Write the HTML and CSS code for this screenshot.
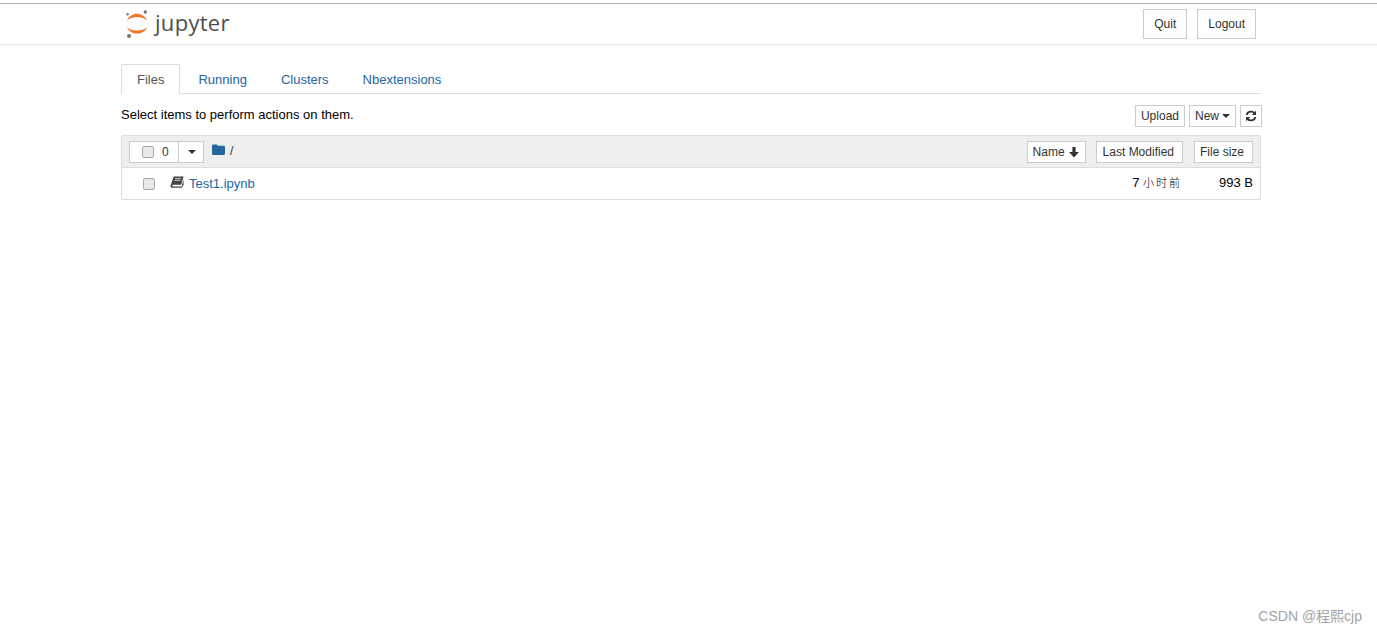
FILE: index.html
```html
<!DOCTYPE html>
<html lang="en">
<head>
<meta charset="utf-8">
<title>Home</title>
<link rel="stylesheet" href="styles.css">
</head>
<body>
<div class="topline"></div>
<header class="header">
  <div class="header-inner">
    <a class="logo">
      <svg class="logo-mark" width="24" height="28" viewBox="0 0 24 28">
        <path d="M2 10.5 C5.5 1.5 18.5 1.5 22 10.5 C17.5 5.8 6.5 5.8 2 10.5 Z" fill="#f37726"/>
        <path d="M2 17.5 C6 25.5 18.5 25.5 22 17.5 C17.5 21.5 6.5 21.5 2 17.5 Z" fill="#f37726"/>
        <circle cx="20.3" cy="2" r="1.7" fill="#767677"/>
        <circle cx="2.6" cy="4.2" r="1.2" fill="#767677"/>
        <circle cx="4" cy="26" r="2" fill="#767677"/>
      </svg>
      <span class="logo-text">jupyter</span>
    </a>
    <div class="header-actions">
      <button class="btn btn-tall">Quit</button>
      <button class="btn btn-tall">Logout</button>
    </div>
  </div>
</header>
<main class="container">
  <nav class="tabs">
    <a class="tab active">Files</a>
    <a class="tab">Running</a>
    <a class="tab">Clusters</a>
    <a class="tab">Nbextensions</a>
  </nav>
  <div class="toolbar">
    <span class="hint">Select items to perform actions on them.</span>
    <div class="toolbar-actions">
      <button class="btn btn-sm">Upload</button>
      <button class="btn btn-sm btn-new">New<span class="caret"></span></button>
      <button class="btn btn-sm btn-icon">
        <svg width="12" height="12" viewBox="0 0 12 12"><g fill="none" stroke="#333" stroke-width="1.8"><path d="M1.6 5A4.5 4.5 0 0 1 9.6 3.4"/><path d="M10.4 7A4.5 4.5 0 0 1 2.4 8.6"/></g><path d="M11 .8V5H6.8Z M1 11.2V7H5.2Z" fill="#333"/></svg>
      </button>
    </div>
  </div>
  <section class="list">
    <div class="list-head">
      <div class="select-group">
        <span class="select-main"><span class="check"></span><span class="count">0</span></span>
        <span class="select-drop"><span class="caret"></span></span>
      </div>
      <svg class="folder" width="13" height="11" viewBox="0 0 13 11"><path d="M0 2C0 1 .6.5 1.4.5H4.2C5 .5 5.4 1 5.6 1.8H11.6C12.4 1.8 13 2.4 13 3.2V9.5C13 10.3 12.4 11 11.6 11H1.4C.6 11 0 10.3 0 9.5Z" fill="#22659f"/></svg>
      <span class="path">/</span>
      <div class="sort-group">
        <button class="btn btn-sort">Name
          <svg width="12" height="12" viewBox="0 0 12 12"><path d="M4.4 1H7.6V6H11L6 11.4 1 6H4.4Z" fill="#333"/></svg>
        </button>
        <button class="btn btn-sort">Last Modified</button>
        <button class="btn btn-sort">File size</button>
      </div>
    </div>
    <div class="list-row">
      <span class="check row-check"></span>
      <svg class="book" width="14" height="12" viewBox="0 0 14 12"><path d="M3.6 .5H13.6L11.2 8.8H3C2.2 8.8 2 10.4 2.9 10.4H11.6L13.6 3.4V9L11.6 11.8H2C.7 11.8.3 10.4.7 9.2Z" fill="#444"/><path d="M5 2.6H11M4.4 4.4H10.4" stroke="#eee" stroke-width=".8"/></svg>
      <a class="file-name">Test1.ipynb</a>
      <span class="modified">7 <span class="cjk">小时前</span></span>
      <span class="size">993 B</span>
    </div>
  </section>
</main>
<div class="watermark">CSDN @程熙cjp</div>
</body>
</html>
```

FILE: styles.css
```css
* { box-sizing: border-box; }
html, body { margin: 0; height: 100%; }
body {
  background: #fff;
  color: #000;
  font-family: "Liberation Sans", Arial, sans-serif;
  font-size: 13px;
  line-height: 18px;
  overflow: hidden;
}
.topline { height: 4px; background: #fff; border-top: 3px solid #fff; border-bottom: 1px solid #b4b4b4; }
.header { height: 41px; border-bottom: 1px solid #e7e7e7; }
.header-inner {
  width: 1140px;
  margin-left: 121px;
  display: flex;
  align-items: flex-start;
  justify-content: space-between;
}
.logo { display: flex; align-items: flex-start; padding: 6px 0 0 4px; }
.logo-mark { display: block; }
.logo-text {
  font-family: "Open Sans", sans-serif;
  font-size: 22px;
  line-height: 25px;
  color: #4e4e4e;
  margin-left: 6px;
  letter-spacing: .3px;
}
.header-actions { display: flex; gap: 10px; padding: 5px 5px 0 0; }
.btn {
  background: #fff;
  border: 1px solid #ccc;
  color: #333;
  font-family: inherit;
  font-size: 12px;
  line-height: 18px;
  padding: 0 6px;
  margin: 0;
  display: inline-flex;
  align-items: center;
  justify-content: center;
}
.btn-tall { height: 30px; padding: 0 10px; }
.container { width: 1140px; margin-left: 121px; }
.tabs {
  margin-top: 19px;
  height: 30px;
  display: flex;
  border-bottom: 1px solid #ddd;
}
.tab {
  height: 30px;
  padding: 6px 15px;
  margin-right: 2px;
  font-size: 13px;
  color: #22659f;
  border: 1px solid transparent;
}
.tab.active {
  color: #555;
  border-color: #ddd;
  border-bottom-color: #fff;
  background: #fff;
  border-radius: 2px 2px 0 0;
}
.toolbar {
  height: 41px;
  padding-top: 11px;
  display: flex;
  justify-content: space-between;
  align-items: flex-start;
}
.hint { line-height: 18px; margin-top: 1px; }
.toolbar-actions { display: flex; gap: 4px; margin-right: -1px; }
.btn-sm { height: 22px; padding: 0 5px; }
.btn-new { gap: 2px; padding: 0 5px; }
.btn-icon { width: 22px; padding: 0; }
.caret {
  display: inline-block;
  width: 0;
  height: 0;
  border-left: 4px solid transparent;
  border-right: 4px solid transparent;
  border-top: 4px solid #333;
  margin-left: 1px;
}
.list { border: 1px solid #ddd; border-radius: 2px; height: 65px; }
.list-head {
  height: 32px;
  background: #eee;
  border-bottom: 1px solid #ddd;
  display: flex;
  align-items: flex-start;
  padding: 5px 7px 0 7px;
}
.select-group { display: flex; height: 22px; background: #fff; border: 1px solid #ccc; }
.select-main {
  width: 49px;
  display: flex;
  align-items: center;
  padding-left: 12px;
  border-right: 1px solid #ccc;
  color: #333;
  font-size: 12px;
}
.select-drop { width: 24px; display: flex; align-items: center; justify-content: center; }
.count { margin-left: 8px; }
.check {
  display: block;
  width: 12px;
  height: 12px;
  border: 1px solid #a6a6a6;
  border-radius: 2px;
  background: #e9e9e9;
  flex: none;
}
.folder { margin: 3px 0 0 8px; }
.path { margin: 2px 0 0 5px; color: #333; font-size: 12px; line-height: 17px; }
.sort-group { margin-left: auto; display: flex; gap: 10px; }
.btn-sort { height: 22px; padding: 0 5px; gap: 3px; }
.btn-sort:nth-child(2) { padding: 0 8px 0 6px; }
.btn-sort:nth-child(3) { padding: 0 8px 0 5px; margin-left: 1px; }
.list-row {
  height: 31px;
  display: flex;
  align-items: center;
  padding: 0 7px 0 21px;
  font-size: 12px;
}
.row-check { margin-top: 1px; }
.book { margin-left: 15px; margin-bottom: 3px; }
.file-name { margin-left: 5px; color: #22659f; font-size: 13px; }
.modified { margin-left: auto; font-size: 13px; margin-bottom: 2px; }
.cjk { font-family: "Noto Sans CJK SC", sans-serif; font-size: 11px; letter-spacing: 2px; font-weight: 300; }
.size { margin-left: 37px; font-size: 13px; margin-bottom: 2px; }
.watermark {
  position: absolute;
  right: 15px;
  bottom: 8px;
  color: #a3a3a3;
  font-size: 14px;
  line-height: 18px;
  font-family: "Liberation Sans", "Noto Sans CJK SC", sans-serif;
}
```
